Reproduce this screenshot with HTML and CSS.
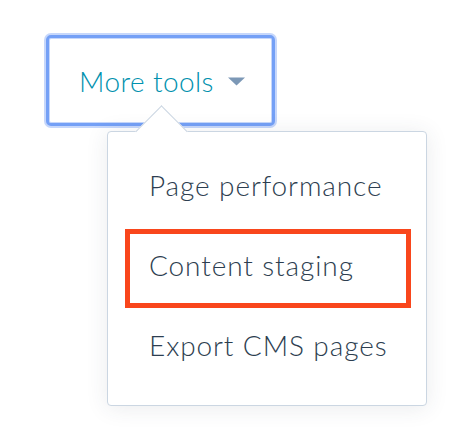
FILE: index.html
```html
<!DOCTYPE html>
<html lang="en">
<head>
<meta charset="utf-8">
<title>More tools</title>
<link rel="stylesheet" href="styles.css">
</head>
<body>
<div class="stage">
  <div class="dropdown">
    <button class="toggle" type="button">
      <span class="toggle-label">More tools</span>
      <svg class="caret" width="17" height="9" viewBox="0 0 17 9" aria-hidden="true"><path d="M0 0.5 H17 L8.5 8.5 Z" fill="#7c98b6"/></svg>
    </button>
    <div class="menu">
      <span class="menu-arrow"></span>
      <ul class="menu-list">
        <li class="menu-item">Page performance</li>
        <li class="menu-item highlight">Content staging</li>
        <li class="menu-item">Export CMS pages</li>
      </ul>
    </div>
  </div>
</div>
</body>
</html>
```
FILE: styles.css
```css
html, body {
  margin: 0;
  padding: 0;
  background: #ffffff;
}
body {
  font-family: Lato, "Noto Sans", sans-serif;
  width: 454px;
  height: 442px;
  overflow: hidden;
}
.stage {
  padding: 35px 0 0 46px;
}
.dropdown {
  position: relative;
  width: 380px;
}
.toggle {
  box-sizing: border-box;
  width: 229px;
  height: 91px;
  display: flex;
  align-items: center;
  justify-content: center;
  gap: 14px;
  padding: 0 0 0 3px;
  background: #ffffff;
  border: 3px solid #74a0f6;
  border-radius: 5px;
  box-shadow: 0 0 0 2px #c6d7fb, inset 0 0 0 1px #c6d7fb;
  font-family: inherit;
  font-size: 28px;
  font-weight: 300;
  letter-spacing: 0.4px;
  color: #0091ae;
  cursor: pointer;
}
.toggle-label {
  line-height: 1;
}
.caret {
  display: block;
  margin-top: 2px;
}
.menu {
  position: absolute;
  left: 61px;
  top: 96px;
  box-sizing: border-box;
  width: 320px;
  height: 275px;
  background: #ffffff;
  border: 1px solid #cbd6e2;
  border-radius: 4px;
  box-shadow: 0 2px 22px rgba(45, 62, 80, 0.10);
  z-index: 2;
}
.menu-arrow {
  position: absolute;
  left: 35px;
  top: -19px;
  width: 36px;
  height: 36px;
  background: #ffffff;
  border-top: 1px solid #cbd6e2;
  border-left: 1px solid #cbd6e2;
  transform: rotate(45deg);
}
.menu-list {
  position: relative;
  list-style: none;
  margin: 0;
  padding: 13px 0 0 0;
}
.menu-item {
  position: relative;
  height: 80px;
  line-height: 80px;
  padding-left: 41px;
  font-size: 28px;
  font-weight: 300;
  letter-spacing: 0.9px;
  color: #2d3e50;
  white-space: nowrap;
}
.highlight::after {
  content: "";
  position: absolute;
  left: 17px;
  right: 15px;
  top: 4px;
  bottom: -3px;
  border: 5px solid #f9461c;
}
```
